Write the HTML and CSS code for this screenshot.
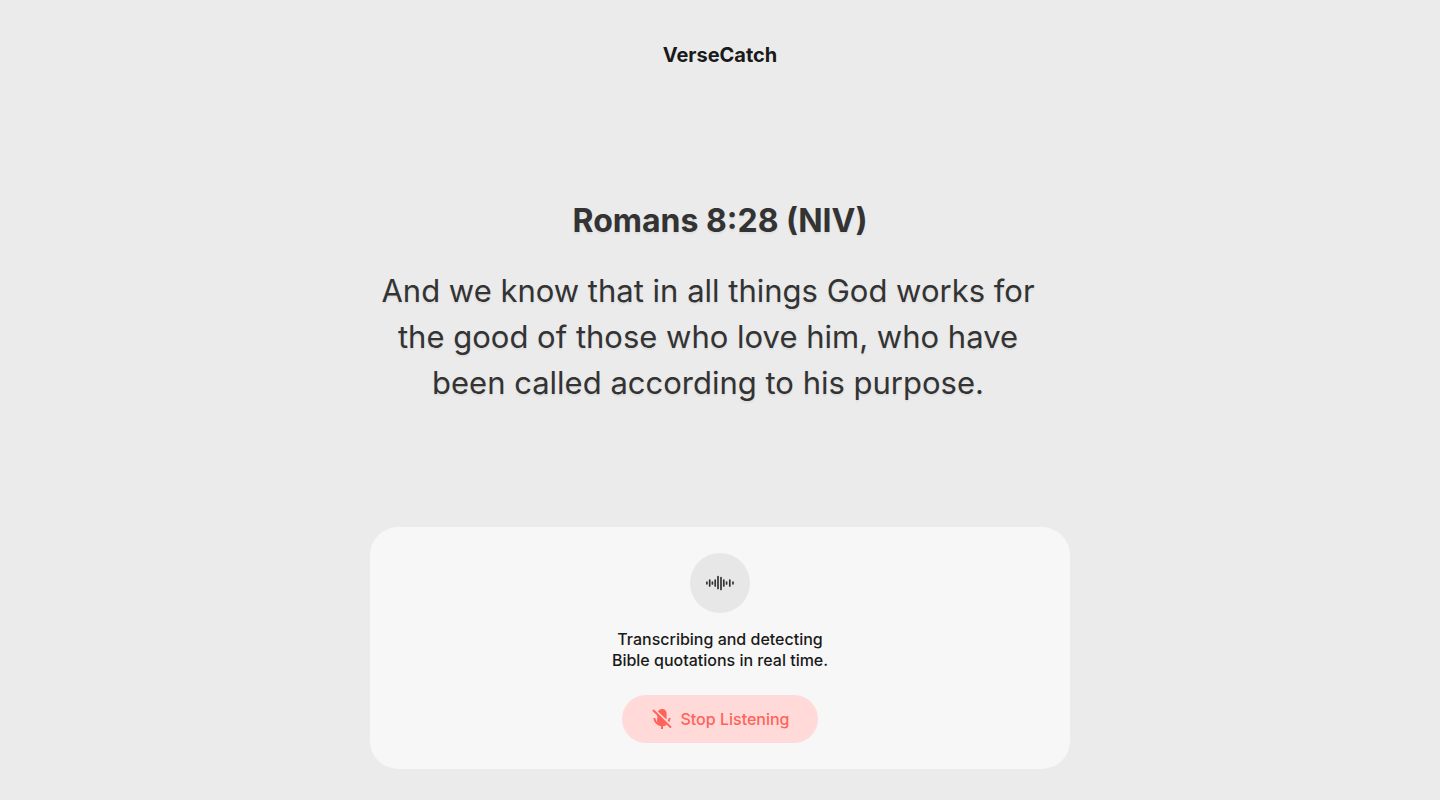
FILE: index.html
```html
<!DOCTYPE html>
<html lang="en">
<head>
  <meta charset="utf-8">
  <meta name="viewport" content="width=device-width, initial-scale=1">
  <title>VerseCatch</title>
  <link rel="stylesheet" href="styles.css">
</head>
<body>
  <header class="brand">VerseCatch</header>
  <main class="content">
    <section class="verse">
      <h1 class="verse-title">Romans 8:28 (NIV)</h1>
      <p class="verse-text">And we know that in all things God works for the good of those who love him, who have been called according to his purpose.</p>
    </section>
    <section class="panel">
      <div class="wave">
        <svg width="28" height="16" viewBox="0 0 28 16" fill="none" stroke="#333" stroke-width="1.7" stroke-linecap="round" aria-hidden="true">
          <path d="M.9 7.2v1.6M3.7 5v6M6.4 7v2M9.2 5v6M12 1.5v12M15 2.5v12M17.8 5v6M20.6 7v2M23.8 5v6M27 7.2v1.6"/>
        </svg>
      </div>
      <p class="status">Transcribing and detecting<br>Bible quotations in real time.</p>
      <button class="stop" type="button">
        <svg width="24" height="24" viewBox="0 0 24 24" fill="none" stroke="#ff6259" stroke-width="2" aria-hidden="true">
          <path d="M7.8 4.7A4.6 4.6 0 0 1 16.6 6.5V11q0 .8-.4 1.6z" fill="#ff6259" stroke="none"/>
          <path d="M7.4 7.5l8.2 7.9A4.6 4.6 0 0 1 7.4 11z" fill="#ff6259" stroke="none"/>
          <path d="M4.4 11a7.6 7.6 0 0 0 11.8 5.8M19.6 11a7.6 7.6 0 0 1-1.4 3.8M12 18v4"/>
          <path d="M5.6 3.2l14 13.2" stroke="#ffdad9" stroke-width="1.2"/>
          <path d="M3 3l18 17.6"/>
        </svg>
        <span>Stop Listening</span>
      </button>
    </section>
  </main>
</body>
</html>
```
FILE: styles.css
```css
* {
  box-sizing: border-box;
}

body {
  display: flex;
  flex-direction: column;
  align-items: center;
  min-height: 100vh;
  margin: 0;
  padding: 40px 20px 31px;
  background: #ebebeb;
  color: #1a1a1a;
  font-family: Inter, "Liberation Sans", sans-serif;
}

.brand {
  font-size: 20px;
  font-weight: 700;
  line-height: 30px;
}

.content {
  display: flex;
  flex: 1;
  flex-direction: column;
  justify-content: space-between;
  width: 100%;
  max-width: 700px;
  padding-top: 128px;
}

.verse {
  color: #333;
  text-align: center;
  text-shadow: 0 2px 2px rgba(0, 0, 0, 0.06);
}

.verse-title {
  margin: 0 0 24px;
  font-size: 32px;
  font-weight: 700;
  line-height: 46px;
}

.verse-text {
  margin: 0;
  padding-right: 24px;
  font-size: 31px;
  line-height: 46px;
}

.panel {
  display: flex;
  flex-direction: column;
  align-items: center;
  padding: 26px;
  border-radius: 28px;
  background: #f7f7f7;
}

.wave {
  display: flex;
  align-items: center;
  justify-content: center;
  width: 60px;
  height: 60px;
  border-radius: 50%;
  background: #e7e7e7;
}

.status {
  margin: 16px 0 24px;
  font-size: 16px;
  font-weight: 500;
  line-height: 21px;
  text-align: center;
}

.stop {
  display: flex;
  align-items: center;
  gap: 6px;
  height: 48px;
  padding: 0 28px;
  border: 0;
  border-radius: 24px;
  background: #ffdad9;
  color: #ff6259;
  font: inherit;
  font-size: 16px;
  font-weight: 500;
  cursor: pointer;
}
```
